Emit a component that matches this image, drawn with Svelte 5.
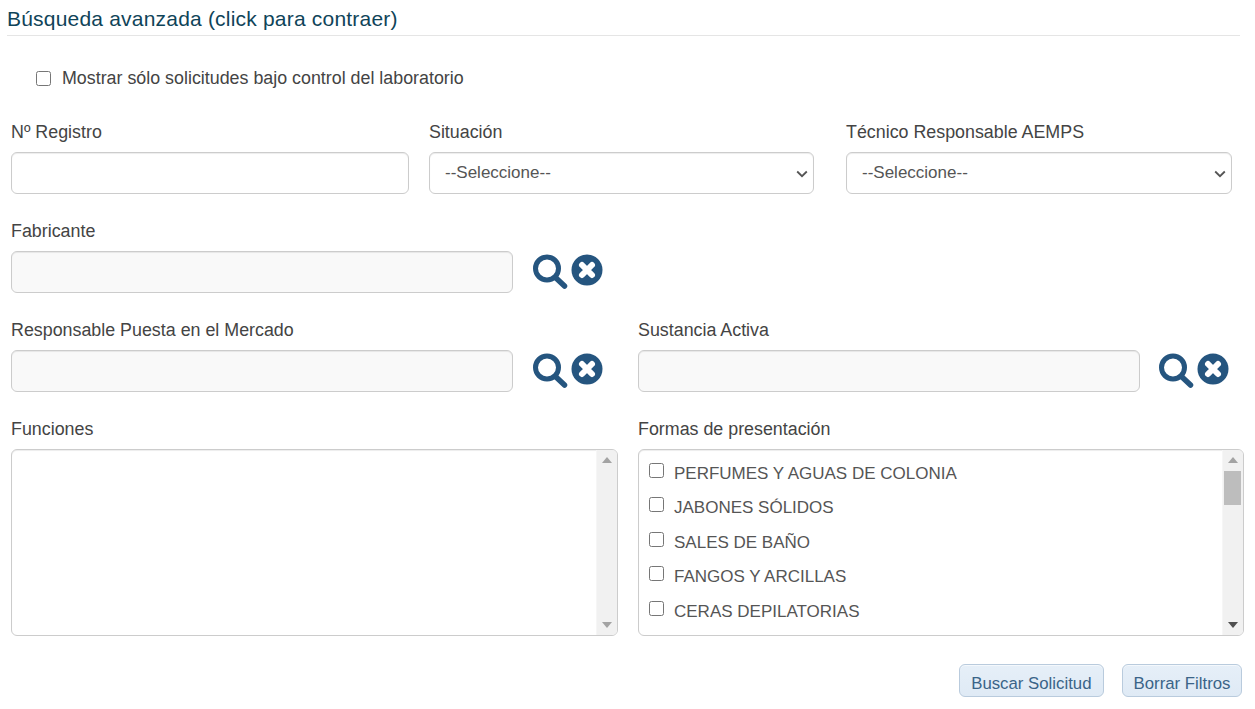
<script>
  const formas = [
    "PERFUMES Y AGUAS DE COLONIA",
    "JABONES SÓLIDOS",
    "SALES DE BAÑO",
    "FANGOS Y ARCILLAS",
    "CERAS DEPILATORIAS",
  ];
</script>

{#snippet lookup()}
  <div class="icons">
    <svg width="35" height="36" viewBox="0 0 35 36" aria-hidden="true">
      <circle cx="14" cy="14.5" r="11.5" fill="none" stroke="#25557f" stroke-width="5" />
      <path d="M23 24 L31.5 32" stroke="#25557f" stroke-width="5.5" stroke-linecap="round" />
    </svg>
    <svg width="32" height="32" viewBox="0 0 32 32" aria-hidden="true">
      <circle cx="16" cy="16" r="15.5" fill="#25557f" />
      <path d="M11 11 L21 21 M21 11 L11 21" stroke="#fff" stroke-width="6" stroke-linecap="round" />
    </svg>
  </div>
{/snippet}

{#snippet scrollbar(thumb)}
  <div class="scrollbar">
    <span class="arrow up"></span>
    {#if thumb}<span class="thumb"></span>{/if}
    <span class="arrow down"></span>
  </div>
{/snippet}

{#snippet select(id)}
  <div class="select">
    <select {id} class="control"><option>--Seleccione--</option></select>
    <svg width="12" height="8" viewBox="0 0 12 8" aria-hidden="true">
      <path d="M1.2 1.5 L6 6.2 L10.8 1.5" fill="none" stroke="#555" stroke-width="1.8" />
    </svg>
  </div>
{/snippet}

<main>
  <h4>Búsqueda avanzada (click para contraer)</h4>

  <label class="only-lab">
    <input type="checkbox" />
    Mostrar sólo solicitudes bajo control del laboratorio
  </label>

  <div class="row row-top">
    <div class="field">
      <label for="registro">Nº Registro</label>
      <input id="registro" class="control" type="text" />
    </div>
    <div class="field">
      <label for="situacion">Situación</label>
      {@render select("situacion")}
    </div>
    <div class="field">
      <label for="tecnico">Técnico Responsable AEMPS</label>
      {@render select("tecnico")}
    </div>
  </div>

  <div class="row row-lookup">
    <div class="field">
      <label for="fabricante">Fabricante</label>
      <div class="with-icons">
        <input id="fabricante" class="control" type="text" readonly />
        {@render lookup()}
      </div>
    </div>
  </div>

  <div class="row row-lookup">
    <div class="field">
      <label for="responsable">Responsable Puesta en el Mercado</label>
      <div class="with-icons">
        <input id="responsable" class="control" type="text" readonly />
        {@render lookup()}
      </div>
    </div>
    <div class="field">
      <label for="sustancia">Sustancia Activa</label>
      <div class="with-icons">
        <input id="sustancia" class="control" type="text" readonly />
        {@render lookup()}
      </div>
    </div>
  </div>

  <div class="row row-lists">
    <div class="field">
      <span class="label">Funciones</span>
      <div class="listbox">
        <div class="items"></div>
        {@render scrollbar(false)}
      </div>
    </div>
    <div class="field">
      <span class="label">Formas de presentación</span>
      <div class="listbox">
        <div class="items">
          {#each formas as forma}
            <label class="item">
              <input type="checkbox" />
              {forma}
            </label>
          {/each}
        </div>
        {@render scrollbar(true)}
      </div>
    </div>
  </div>

  <div class="actions">
    <button type="button">Buscar Solicitud</button>
    <button type="button">Borrar Filtros</button>
  </div>
</main>

<style>
  :global(body) {
    background: #fff;
    font-family: "Liberation Sans", Arial, sans-serif;
    color: #444;
  }
  main {
    height: 709px;
    box-sizing: border-box;
    padding: 7px 11px 0 11px;
    overflow: hidden;
  }
  h4 {
    margin: 0 4px 0 -4px;
    padding-bottom: 5px;
    height: 23px;
    font-size: 21px;
    line-height: 23px;
    font-weight: 400;
    letter-spacing: 0.2px;
    color: #0f4459;
    border-bottom: 1px solid #e5e5e5;
  }
  input[type="checkbox"] {
    width: 15px;
    height: 15px;
    margin: 0;
    flex: none;
  }
  .only-lab {
    display: flex;
    align-items: center;
    gap: 11px;
    margin: 32px 0 0 25px;
    height: 20px;
    font-size: 17.85px;
    color: #444;
  }
  .row {
    display: grid;
  }
  .row-top {
    grid-template-columns: 398px 385px 398px;
    column-gap: 20px;
    margin-top: 34px;
  }
  .row-top .field:last-child {
    margin-left: 12px;
  }
  .row-lookup,
  .row-lists {
    grid-template-columns: 607px 606px;
    column-gap: 20px;
    margin-top: 27px;
  }
  .field label:not(.item),
  .label {
    display: block;
    height: 20px;
    margin-bottom: 10px;
    font-size: 17.85px;
    line-height: 20px;
    color: #444;
  }
  .control {
    display: block;
    width: 100%;
    height: 42px;
    box-sizing: border-box;
    padding: 6px 12px;
    font-family: inherit;
    font-size: 17px;
    color: #555;
    background-color: #fff;
    border: 1px solid #ccc;
    border-radius: 6px;
    box-shadow: inset 0 1px 1px rgba(0, 0, 0, 0.075);
  }
  .select {
    position: relative;
  }
  .select select {
    appearance: none;
    padding: 4px 12px 6px 15px;
  }
  .select svg {
    position: absolute;
    top: 18px;
    right: 6px;
    pointer-events: none;
  }
  input[readonly] {
    background-color: #f9f9f9;
  }
  .with-icons {
    display: flex;
    align-items: center;
  }
  .with-icons .control {
    width: 502px;
    flex: none;
  }
  .icons {
    display: flex;
    align-items: flex-start;
    gap: 3px;
    margin-left: 20px;
  }
  .field + .field .icons {
    margin-left: 19px;
  }
  .listbox {
    display: flex;
    height: 187px;
    box-sizing: border-box;
    border: 1px solid #ccc;
    border-radius: 6px;
    overflow: hidden;
    box-shadow: inset 0 1px 1px rgba(0, 0, 0, 0.075);
  }
  .items {
    flex: 1;
    padding: 6px 10px;
  }
  .item {
    display: flex;
    align-items: center;
    gap: 10px;
    height: 34.5px;
    padding-top: 1.2px;
    box-sizing: border-box;
    font-size: 17px;
    color: #555;
  }
  .item input {
    position: relative;
    top: -3.5px;
  }
  .scrollbar {
    position: relative;
    width: 20px;
    flex: none;
    background: #f1f1f1;
    border-left: 1px solid #f6f6f6;
  }
  .arrow {
    position: absolute;
    left: 5px;
    width: 0;
    height: 0;
    border-left: 5px solid transparent;
    border-right: 5px solid transparent;
  }
  .arrow.up {
    top: 7px;
    border-bottom: 6px solid #a3a3a3;
  }
  .arrow.down {
    bottom: 7px;
    border-top: 6px solid #a3a3a3;
  }
  .field:last-child .arrow.down {
    border-top-color: #505050;
  }
  .thumb {
    position: absolute;
    top: 21px;
    left: 1px;
    width: 17px;
    height: 34px;
    background: #bdbdbd;
  }
  .actions {
    display: flex;
    justify-content: flex-end;
    gap: 18px;
    margin: 28px 2px 0 0;
  }
  button {
    height: 33px;
    padding: 6px 11.5px 0;
    font-family: inherit;
    font-size: 16.8px;
    color: #3a6488;
    background: linear-gradient(#e6eff8, #dfeaf5);
    border: 1px solid #b9cbdd;
    border-radius: 6px;
    box-shadow: inset 0 1px 0 #f4f8fc;
  }
  button:last-child {
    padding: 6px 10.5px 0;
  }
</style>
